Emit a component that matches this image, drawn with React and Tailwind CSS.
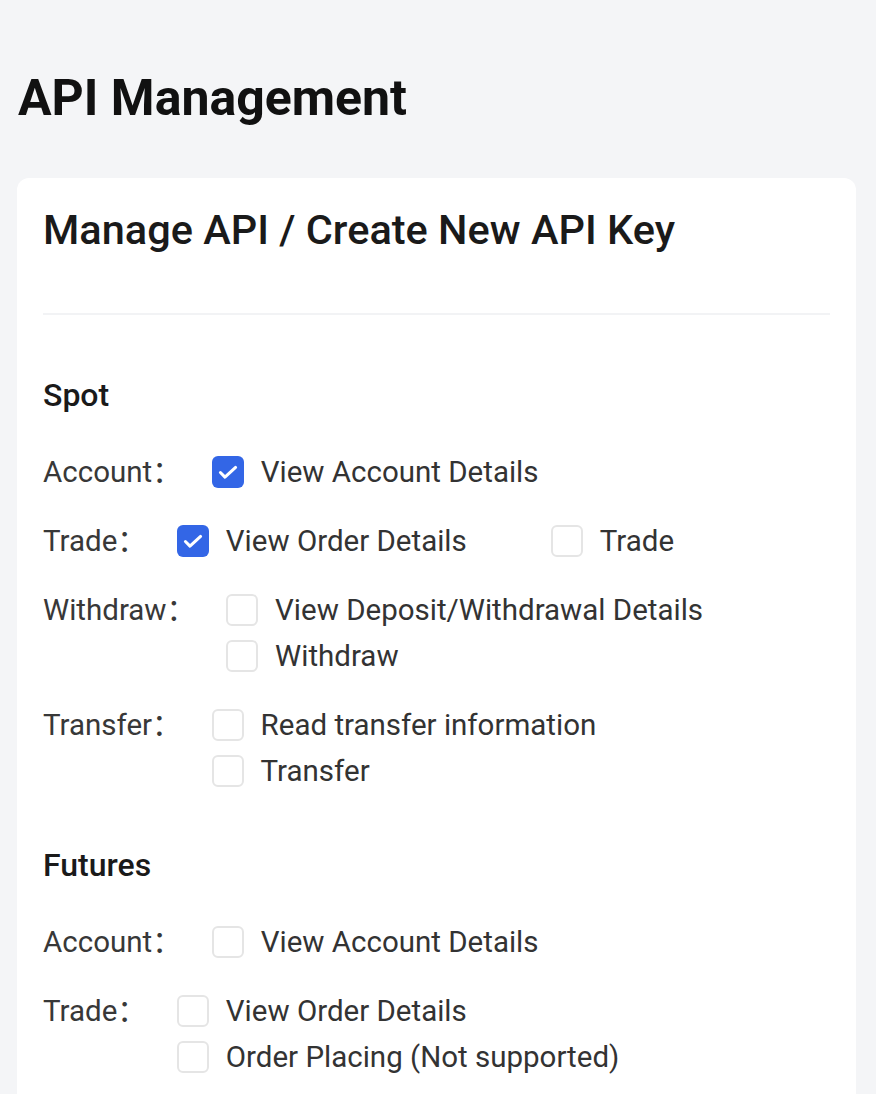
const FONT = { fontFamily: 'Roboto, "Noto Sans CJK SC", "Liberation Sans", sans-serif' }

const SECTIONS = [
  {
    title: 'Spot',
    groups: [
      { label: 'Account', rows: [[{ text: 'View Account Details', checked: true }]] },
      { label: 'Trade', rows: [[{ text: 'View Order Details', checked: true }, { text: 'Trade' }]] },
      { label: 'Withdraw', rows: [[{ text: 'View Deposit/Withdrawal Details' }], [{ text: 'Withdraw' }]] },
      { label: 'Transfer', rows: [[{ text: 'Read transfer information' }], [{ text: 'Transfer' }]] },
    ],
  },
  {
    title: 'Futures',
    groups: [
      { label: 'Account', rows: [[{ text: 'View Account Details' }]] },
      { label: 'Trade', rows: [[{ text: 'View Order Details' }], [{ text: 'Order Placing (Not supported)' }]] },
    ],
  },
]

function Checkbox({ checked }) {
  if (checked) {
    return (
      <span className="flex h-[32px] w-[32px] shrink-0 items-center justify-center rounded-[6px] bg-[#3366e6]">
        <svg viewBox="0 0 24 24" className="h-[26px] w-[26px]" fill="none" stroke="#fff" strokeWidth="2.8" strokeLinecap="round" strokeLinejoin="round">
          <path d="M5 12.5l4.2 4.2L19 7.8" />
        </svg>
      </span>
    )
  }
  return <span className="h-[32px] w-[32px] shrink-0 rounded-[6px] border-2 border-[#e5e5e5] bg-white" />
}

function Option({ text, checked }) {
  return (
    <label className="flex items-center gap-[17px]">
      <Checkbox checked={checked} />
      <span className="text-[29.5px] text-[#333333]">{text}</span>
    </label>
  )
}

export default function App() {
  return (
    <div className="min-h-[1094px] bg-[#f4f5f7] pt-[62px] pl-[17px] pr-[20px]" style={FONT}>
      <h1 className="pl-[1px] text-[50px] font-bold leading-[72px] text-[#111111]">API Management</h1>

      <div className="mt-[44px] min-h-[960px] rounded-t-[12px] bg-white px-[26px] pt-[22px]">
        <h2 className="text-[41.5px] font-medium leading-[60px] text-[#1a1a1a]">Manage API / Create New API Key</h2>
        <div className="mt-[53px] h-[2px] bg-[#f2f3f5]" />

        {SECTIONS.map((s, si) => (
          <div key={s.title} className={si === 0 ? 'pt-[60px]' : 'pt-[51px]'}>
            <div className="text-[32px] font-medium leading-[40px] text-[#1a1a1a]">{s.title}</div>
            <div className="mt-[34px] flex flex-col gap-[23px]">
              {s.groups.map((g) => (
                <div key={g.label} className="flex items-start">
                  <span className="mr-[30px] text-[29.5px] leading-[46px] text-[#383838]">{g.label}：</span>
                  <div className="flex flex-col">
                    {g.rows.map((row, ri) => (
                      <div key={ri} className="flex h-[46px] items-center gap-[84px]">
                        {row.map((o) => <Option key={o.text} {...o} />)}
                      </div>
                    ))}
                  </div>
                </div>
              ))}
            </div>
          </div>
        ))}
      </div>
    </div>
  )
}
